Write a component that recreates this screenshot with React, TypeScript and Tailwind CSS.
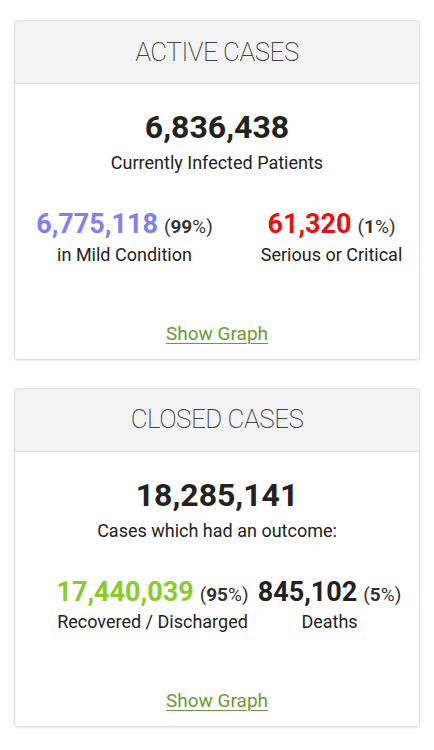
import React from "react";

type Stat = { value: string; pct: string; label: string; color: string };

function Card(props: {
  title: string;
  total: string;
  subtitle: string;
  left: Stat;
  right: Stat;
  cols: string;
  mt: string;
}) {
  const { title, total, subtitle, left, right, cols, mt } = props;
  const Col = ({ s }: { s: Stat }) => (
    <div className="flex flex-col items-center">
      <div className="flex justify-center whitespace-nowrap w-full">
        <span className="flex items-baseline">
          <span className={`text-[27px] font-bold leading-[32px] ${s.color}`}>{s.value}</span>
          <span className="text-[19px] text-[#333] ml-[6px]">
            (<span className="font-bold">{s.pct}</span>%)
          </span>
        </span>
      </div>
      <div className="flex justify-center whitespace-nowrap w-full text-[18px] text-[#222] leading-[24px] mt-[1px]">
        {s.label}
      </div>
    </div>
  );
  return (
    <div className={`mx-[14px] ${mt} border border-[#dedede] rounded-[4px] shadow-[0_1px_2px_rgba(0,0,0,0.08)] overflow-visible`}>
      <div className="h-[63px] bg-[#f3f3f3] border-b border-[#e2e2e2] rounded-t-[4px] flex items-center justify-center">
        <span className="text-[26px] font-extralight text-[#444] tracking-[-0.5px]">{title}</span>
      </div>
      <div className="flex flex-col items-center pt-[24px] pb-[12px]">
        <div className="text-[32px] font-bold text-[#222] leading-[38px]">{total}</div>
        <div className="text-[18px] text-[#222] leading-[24px] mt-[5px]">{subtitle}</div>
      </div>
      <div className={`grid ${cols} mt-[21px]`}>
        <Col s={left} />
        <Col s={right} />
      </div>
      <div className="flex justify-center mt-[54px] pb-[12px]">
        <span className="text-[19px] text-[#6a9a35] underline underline-offset-[3px] decoration-[1px] leading-[26px]">
          Show Graph
        </span>
      </div>
    </div>
  );
}

export default function App() {
  return (
    <div
      className="w-[434px] h-[750px] bg-white overflow-hidden pt-[20px]"
      style={{ fontFamily: "Roboto, 'Liberation Sans', sans-serif" }}
    >
      <Card
        title="ACTIVE CASES"
        total="6,836,438"
        subtitle="Currently Infected Patients"
        left={{ value: "6,775,118", pct: "99", label: "in Mild Condition", color: "text-[#8080f0]" }}
        right={{ value: "61,320", pct: "1", label: "Serious or Critical", color: "text-[#e8110f]" }}
        cols="grid-cols-[207px_207px] ml-[6px]"
        mt="mt-0"
      />
      <Card
        title="CLOSED CASES"
        total="18,285,141"
        subtitle="Cases which had an outcome:"
        left={{ value: "17,440,039", pct: "95", label: "Recovered / Discharged", color: "text-[#8aca2b]" }}
        right={{ value: "845,102", pct: "5", label: "Deaths", color: "text-[#222]" }}
        cols="grid-cols-[177px_177px] ml-[49px]"
        mt="mt-[28px]"
      />
    </div>
  );
}
